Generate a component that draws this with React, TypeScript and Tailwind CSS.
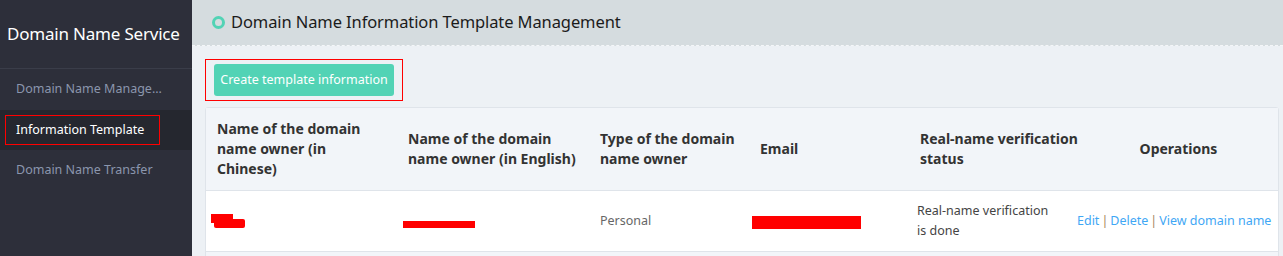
import React from "react";

const font = { fontFamily: '"Noto Sans", "Open Sans", sans-serif' };

export default function App() {
  return (
    <div className="flex h-[256px] w-[1283px] overflow-hidden" style={font}>
      {/* Sidebar */}
      <div className="w-[192px] shrink-0 bg-[#2d2f3a] flex flex-col">
        <div className="h-[69px] flex items-center pl-[7px] text-[17px] text-white border-b border-[#3a3d49] tracking-[-0.2px]">
          Domain Name Service
        </div>
        <div className="h-[41px] flex items-center pl-[16px] text-[12.5px] text-[#8b96ad]">
          Domain Name Manage...
        </div>
        <div className="h-[40px] flex items-center bg-[#25272f] pl-[5px]">
          <div className="w-[155px] h-[30px] border border-[#ff0000] flex items-center pl-[10px] text-[12.5px] text-white">
            Information Template
          </div>
        </div>
        <div className="h-[41px] flex items-center pl-[16px] text-[12.5px] text-[#8b96ad]">
          Domain Name Transfer
        </div>
      </div>

      {/* Main */}
      <div className="flex-1 bg-[#edf1f5] flex flex-col">
        <div className="h-[46px] shrink-0 bg-[#d5dcdf] border-b border-dashed border-[#f4f6f8] flex items-center pl-[20px]">
          <span className="w-[13px] h-[13px] rounded-full border-[3px] border-[#52d3b5] mr-[6px]" />
          <span className="text-[16.5px] text-[#1b1b1b] tracking-[-0.1px]">
            Domain Name Information Template Management
          </span>
        </div>

        <div className="pl-[13px] pt-[13px]">
          <div className="w-[198px] h-[42px] border border-[#ff0000] flex items-center pl-[8px]">
            <button className="w-[180px] h-[32px] rounded-[3px] bg-[#52d3b5] text-white text-[12.5px]">
              Create template information
            </button>
          </div>
        </div>

        <div className="ml-[13px] mt-[6px] w-[1074px] border border-[#dfe4ea] rounded-t-[3px] bg-white">
          <div className="grid grid-cols-[191px_192px_160px_160px_160px_209px] bg-[#f2f5f9] h-[83px] border-b border-[#dfe4ea] text-[14px] font-bold text-[#333] leading-[20px]">
            <div className="pl-[11px] pr-[20px] flex items-center">Name of the domain name owner (in Chinese)</div>
            <div className="pl-[11px] flex items-center">Name of the domain name owner (in English)</div>
            <div className="pl-[11px] flex items-center">Type of the domain name owner</div>
            <div className="pl-[11px] flex items-center">Email</div>
            <div className="pl-[11px] flex items-center">
              <div className="w-[170px] shrink-0">Real-name verification status</div>
            </div>
            <div className="flex items-center justify-center pl-[10px]">Operations</div>
          </div>
          <div className="grid grid-cols-[191px_192px_160px_160px_160px_209px] h-[61px] border-b border-[#dfe4ea] text-[12.5px] text-[#555] leading-[20px]">
            <div className="pl-[5px] flex items-center">
              <div className="relative w-[34px] h-[15px]">
                <div className="absolute left-0 top-0 w-[22px] h-[9px] bg-[#ff0000]" />
                <div className="absolute left-[3px] top-[5px] w-[31px] h-[9px] bg-[#ff0000] rounded-[2px]" />
              </div>
            </div>
            <div className="pl-[6px] flex items-center">
              <div className="w-[72px] h-[7px] bg-[#ff0000] mt-[6px]" />
            </div>
            <div className="pl-[11px] flex items-center text-[#666]">Personal</div>
            <div className="pl-[3px] flex items-center">
              <div className="w-[109px] h-[13px] bg-[#ff0000] mt-[2px]" />
            </div>
            <div className="pl-[8px] pr-[10px] flex items-center text-[#444]">Real-name verification is done</div>
            <div className="pl-[8px] flex items-center text-[#3fa7f5]">
              <span>Edit</span>
              <span className="text-[#a7865d] mx-[2px]">|</span>
              <span>Delete</span>
              <span className="text-[#a7865d] mx-[2px]">|</span>
              <span>View domain name</span>
            </div>
          </div>
          <div className="h-[10px] bg-[#f2f5f9]" />
        </div>
      </div>
    </div>
  );
}
